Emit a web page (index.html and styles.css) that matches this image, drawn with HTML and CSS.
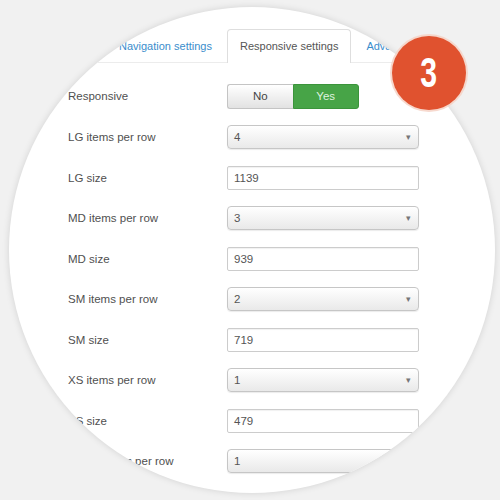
FILE: index.html
```html
<!DOCTYPE html>
<html>
<head>
<meta charset="utf-8">
<link rel="stylesheet" href="styles.css">
</head>
<body>
<div class="stage">
  <div class="circle">
    <ul class="tabs">
      <li class="tab">Navigation settings</li>
      <li class="tab active">Responsive settings</li>
      <li class="tab">Advanced</li>
    </ul>
    <div class="form">
      <div class="row first">
        <div class="label">Responsive</div>
        <div class="toggle"><span class="opt no">No</span><span class="opt yes">Yes</span></div>
      </div>
      <div class="row">
        <div class="label">LG items per row</div>
        <div class="select">4<span class="caret">&#9662;</span></div>
      </div>
      <div class="row">
        <div class="label">LG size</div>
        <div class="input">1139</div>
      </div>
      <div class="row">
        <div class="label">MD items per row</div>
        <div class="select">3<span class="caret">&#9662;</span></div>
      </div>
      <div class="row">
        <div class="label">MD size</div>
        <div class="input">939</div>
      </div>
      <div class="row">
        <div class="label">SM items per row</div>
        <div class="select">2<span class="caret">&#9662;</span></div>
      </div>
      <div class="row">
        <div class="label">SM size</div>
        <div class="input">719</div>
      </div>
      <div class="row">
        <div class="label">XS items per row</div>
        <div class="select">1<span class="caret">&#9662;</span></div>
      </div>
      <div class="row">
        <div class="label">XS size</div>
        <div class="input">479</div>
      </div>
      <div class="row">
        <div class="label">Phone items per row</div>
        <div class="select">1<span class="caret">&#9662;</span></div>
      </div>
    </div>
  </div>
  <div class="badge"><span class="num">3</span></div>
</div>
</body>
</html>
```

FILE: styles.css
```css
html, body {
  margin: 0;
  padding: 0;
  background: #f1f1f1;
}

.stage {
  position: relative;
  width: 500px;
  height: 500px;
  overflow: hidden;
  font-family: "Liberation Sans", Arial, sans-serif;
}

.circle {
  width: 486px;
  height: 486px;
  margin: 7px 0 0 9px;
  border-radius: 50%;
  overflow: hidden;
  background: #fff;
  box-shadow: 0 0 7px rgba(0, 0, 0, 0.13);
  display: flex;
  flex-direction: column;
}

.tabs {
  list-style: none;
  margin: 22px 0 0 0;
  padding: 0 0 0 95px;
  display: flex;
  border-bottom: 1px solid #ececec;
}

.tab {
  font-size: 11px;
  color: #3a8dcc;
  height: 32px;
  line-height: 32px;
  padding: 0 14px;
  white-space: nowrap;
  border: 1px solid transparent;
  border-bottom: none;
  margin-bottom: -1px;
}

.tab.active {
  color: #555;
  background: #fff;
  border-color: #dedede;
  border-radius: 4px 4px 0 0;
  padding: 0 12px;
  height: 33px;
}

.form {
  margin: 12px 0 0 59px;
  display: flex;
  flex-direction: column;
}

.row {
  display: grid;
  grid-template-columns: 159px 192px;
  align-items: center;
  height: 40.5px;
}

.row.first {
  height: 42px;
}

.label {
  font-size: 11.5px;
  color: #505050;
  white-space: nowrap;
}

.toggle {
  display: flex;
  width: 132px;
  height: 25px;
}

.opt {
  flex: 1;
  display: flex;
  align-items: center;
  justify-content: center;
  font-size: 11.5px;
  box-sizing: border-box;
}

.opt.no {
  color: #444;
  background: linear-gradient(#ffffff, #e2e2e2);
  border: 1px solid #c4c4c4;
  border-right: none;
  border-radius: 3px 0 0 3px;
}

.opt.yes {
  color: #dff2df;
  background: #47a447;
  border: 1px solid #3b943b;
  border-radius: 0 3px 3px 0;
}

.select,
.input {
  box-sizing: border-box;
  height: 24px;
  width: 192px;
  padding: 0 6px;
  display: flex;
  align-items: center;
  font-size: 11.5px;
  color: #555;
  border: 1px solid #cccccc;
}

.select {
  border-radius: 4px;
  border-color: #c6c6c6;
  background: linear-gradient(#ffffff, #e9e9e9);
  box-shadow: 0 1px 1px rgba(0, 0, 0, 0.08);
}

.caret {
  margin-left: auto;
  font-size: 9px;
  color: #777;
  padding-right: 1px;
}

.input {
  border-radius: 2px;
  background: #fff;
  box-shadow: inset 0 1px 1px rgba(0, 0, 0, 0.06);
}

.badge {
  position: absolute;
  left: 392px;
  top: 36px;
  width: 74px;
  height: 74px;
  border-radius: 50%;
  background: #e0522f;
  box-shadow: 0 0 0 2px rgba(246, 210, 198, 0.85);
  color: #fff;
  font-family: "Liberation Sans", Arial, sans-serif;
  font-weight: bold;
  font-size: 42px;
  line-height: 74px;
  text-align: center;
}

.num {
  display: inline-block;
  transform: scaleX(0.72);
}
```
